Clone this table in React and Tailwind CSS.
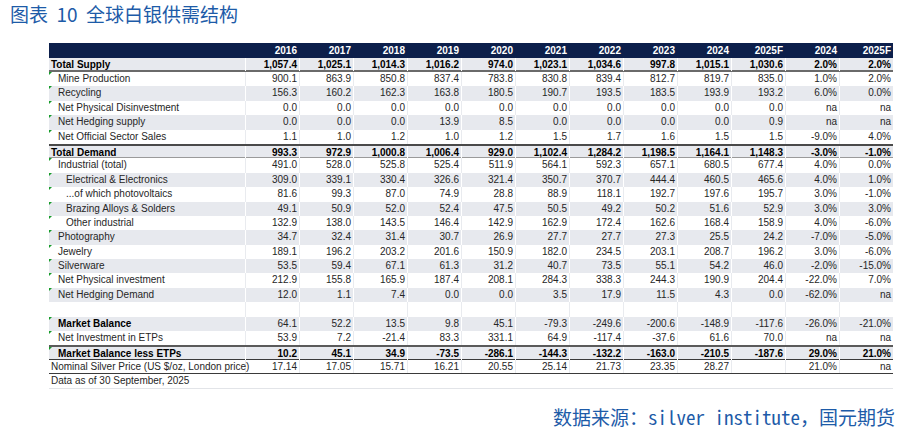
import React from "react";

const heads = ["2016", "2017", "2018", "2019", "2020", "2021", "2022", "2023", "2024", "2025F", "2024", "2025F"];

// kind: total | item | sub | blank | mb | mbe | price
const rows = [
  { label: "Total Supply", kind: "total", bt: false, bb: "border-b-2 border-[#6a6a6a]", vals: ["1,057.4", "1,025.1", "1,014.3", "1,016.2", "974.0", "1,023.1", "1,034.6", "997.8", "1,015.1", "1,030.6", "2.0%", "2.0%"] },
  { label: "Mine Production", kind: "item", vals: ["900.1", "863.9", "850.8", "837.4", "783.8", "830.8", "839.4", "812.7", "819.7", "835.0", "1.0%", "2.0%"] },
  { label: "Recycling", kind: "item", vals: ["156.3", "160.2", "162.3", "163.8", "180.5", "190.7", "193.5", "183.5", "193.9", "193.2", "6.0%", "0.0%"] },
  { label: "Net Physical Disinvestment", kind: "item", vals: ["0.0", "0.0", "0.0", "0.0", "0.0", "0.0", "0.0", "0.0", "0.0", "0.0", "na", "na"] },
  { label: "Net Hedging supply", kind: "item", vals: ["0.0", "0.0", "0.0", "13.9", "8.5", "0.0", "0.0", "0.0", "0.0", "0.9", "na", "na"] },
  { label: "Net Official Sector Sales", kind: "item", vals: ["1.1", "1.0", "1.2", "1.0", "1.2", "1.5", "1.7", "1.6", "1.5", "1.5", "-9.0%", "4.0%"] },
  { label: "Total Demand", kind: "total", bb: "border-t-2 border-t-[#4a4a4a] border-b border-b-[#9a9a9a]", vals: ["993.3", "972.9", "1,000.8", "1,006.4", "929.0", "1,102.4", "1,284.2", "1,198.5", "1,164.1", "1,148.3", "-3.0%", "-1.0%"] },
  { label: "Industrial (total)", kind: "item", vals: ["491.0", "528.0", "525.8", "525.4", "511.9", "564.1", "592.3", "657.1", "680.5", "677.4", "4.0%", "0.0%"] },
  { label: "Electrical & Electronics", kind: "sub", vals: ["309.0", "339.1", "330.4", "326.6", "321.4", "350.7", "370.7", "444.4", "460.5", "465.6", "4.0%", "1.0%"] },
  { label: "...of which photovoltaics", kind: "sub", vals: ["81.6", "99.3", "87.0", "74.9", "28.8", "88.9", "118.1", "192.7", "197.6", "195.7", "3.0%", "-1.0%"] },
  { label: "Brazing Alloys & Solders", kind: "sub", vals: ["49.1", "50.9", "52.0", "52.4", "47.5", "50.5", "49.2", "50.2", "51.6", "52.9", "3.0%", "3.0%"] },
  { label: "Other industrial", kind: "sub", vals: ["132.9", "138.0", "143.5", "146.4", "142.9", "162.9", "172.4", "162.6", "168.4", "158.9", "4.0%", "-6.0%"] },
  { label: "Photography", kind: "item", vals: ["34.7", "32.4", "31.4", "30.7", "26.9", "27.7", "27.7", "27.3", "25.5", "24.2", "-7.0%", "-5.0%"] },
  { label: "Jewelry", kind: "item", vals: ["189.1", "196.2", "203.2", "201.6", "150.9", "182.0", "234.5", "203.1", "208.7", "196.2", "3.0%", "-6.0%"] },
  { label: "Silverware", kind: "item", vals: ["53.5", "59.4", "67.1", "61.3", "31.2", "40.7", "73.5", "55.1", "54.2", "46.0", "-2.0%", "-15.0%"] },
  { label: "Net Physical investment", kind: "item", vals: ["212.9", "155.8", "165.9", "187.4", "208.1", "284.3", "338.3", "244.3", "190.9", "204.4", "-22.0%", "7.0%"] },
  { label: "Net Hedging Demand", kind: "item", vals: ["12.0", "1.1", "7.4", "0.0", "0.0", "3.5", "17.9", "11.5", "4.3", "0.0", "-62.0%", "na"] },
  { label: "", kind: "blank", vals: ["", "", "", "", "", "", "", "", "", "", "", ""] },
  { label: "Market Balance", kind: "mb", vals: ["64.1", "52.2", "13.5", "9.8", "45.1", "-79.3", "-249.6", "-200.6", "-148.9", "-117.6", "-26.0%", "-21.0%"] },
  { label: "Net Investment in ETPs", kind: "item", vals: ["53.9", "7.2", "-21.4", "83.3", "331.1", "64.9", "-117.4", "-37.6", "61.6", "70.0", "na", "na"] },
  { label: "Market Balance less ETPs", kind: "mbe", bb: "border-t-2 border-t-[#5a5a5a] border-b border-b-[#3a3a3a]", vals: ["10.2", "45.1", "34.9", "-73.5", "-286.1", "-144.3", "-132.2", "-163.0", "-210.5", "-187.6", "29.0%", "21.0%"] },
  { label: "Nominal Silver Price (US $/oz, London price)", kind: "price", bb: "border-b border-[#3a3a3a]", vals: ["17.14", "17.05", "15.71", "16.21", "20.55", "25.14", "21.73", "23.35", "28.27", "", "21.0%", "na"] },
];

function Row({ row, index }) {
  const gray = index % 2 === 0;
  const bold = row.kind === "total" || row.kind === "mbe";
  const labelBold = bold || row.kind === "mb";
  const mark = row.kind !== "total" && row.kind !== "blank" && row.kind !== "price";
  const pad =
    row.kind === "sub"
      ? "pl-[17px]"
      : row.kind === "item" || row.kind === "mb" || row.kind === "mbe"
      ? "pl-[9px]"
      : "pl-[2px]";
  const sep = gray ? "border-l border-white" : "border-l border-[#e9ebef]";

  return (
    <div
      className={`grid grid-cols-[196px_repeat(12,54px)] h-[14.4px] leading-[13px] ${
        gray ? "bg-[#e7e9ee]" : "bg-white"
      } ${row.bb || ""} ${bold ? "font-bold text-black" : "text-[#262626]"}`}
    >
      <div className={`relative ${pad} whitespace-nowrap ${labelBold ? "font-bold text-black" : ""}`}>
        {mark && (
          <span className="absolute left-0 top-0 w-0 h-0 border-t-[3px] border-r-[3px] border-t-[#169c2a] border-r-transparent" />
        )}
        {row.label}
      </div>
      {row.vals.map((v, i) => (
        <div key={i} className={`${sep} text-right pr-[2px]`}>
          {v}
        </div>
      ))}
    </div>
  );
}

export default function App() {
  return (
    <div className="w-[910px] h-[433px] bg-white font-['Liberation_Sans',Arial,sans-serif] overflow-hidden">
      <div className="h-[43px] pl-[10px] pt-[1px] text-[19px] leading-[26px] text-[#1d5ba8] font-['Noto_Sans_CJK_SC',sans-serif] whitespace-pre">
        图表  10  全球白银供需结构
      </div>

      <div className="ml-[49px] w-[844px] text-[10px]">
        <div className="grid grid-cols-[196px_repeat(12,54px)] h-[14.6px] leading-[15px] bg-[#0c1f4b] text-white font-bold">
          <div />
          {heads.map((h, i) => (
            <div key={i} className="text-right pr-[2px]">
              {h}
            </div>
          ))}
        </div>

        {rows.map((row, i) => (
          <Row key={i} row={row} index={i} />
        ))}

        <div className="h-[14.4px] leading-[14px] pl-[2px] text-[#262626] border-b border-[#e2e4e8]">
          Data as of 30 September, 2025
        </div>
      </div>

      <div className="mt-[15px] pr-[15px] text-right text-[19px] leading-[26px] text-[#1d5ba8] font-['Noto_Sans_Mono_CJK_SC','Noto_Sans_CJK_SC',monospace] whitespace-pre">
        数据来源：silver institute，国元期货
      </div>
    </div>
  );
}
